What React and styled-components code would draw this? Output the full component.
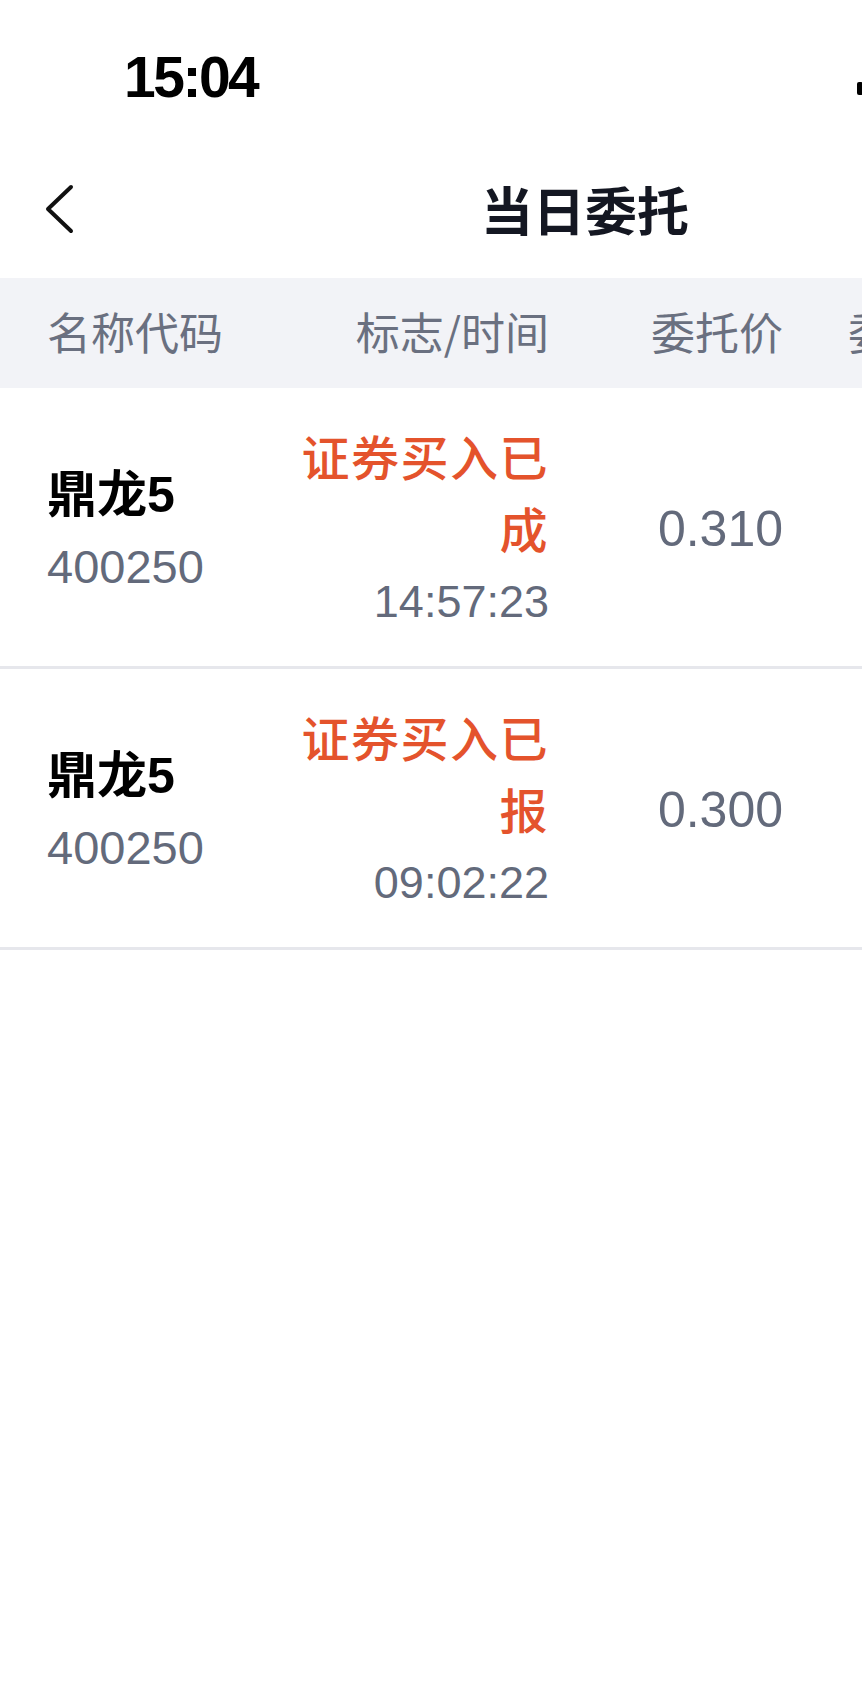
import React from "react";
import styled, { createGlobalStyle } from "styled-components";

const GlobalStyle = createGlobalStyle`
  html, body {
    margin: 0;
    padding: 0;
    background: #ffffff;
    overflow: hidden;
  }
  body {
    font-family: "Liberation Sans", "Noto Sans CJK SC", sans-serif;
    -webkit-font-smoothing: antialiased;
  }
`;

const Page = styled.div`
  width: 1170px;
  min-height: 1684px;
  background: #ffffff;
`;

const StatusBar = styled.div`
  height: 154px;
  display: grid;
  grid-template-columns: 857px 1fr;
  align-items: center;
`;

const Clock = styled.div`
  padding-left: 124px;
  font-family: "Liberation Sans", sans-serif;
  font-weight: 700;
  font-size: 57px;
  line-height: 1;
  letter-spacing: -2.5px;
  color: #000000;
`;

const StatusIcons = styled.div`
  display: flex;
  align-items: center;
  gap: 12px;
  padding-top: 10px;
`;

const NavBar = styled.div`
  height: 124px;
  box-sizing: border-box;
  padding: 0 43px 14px;
  display: grid;
  grid-template-columns: 1fr auto 1fr;
  align-items: center;
`;

const BackButton = styled.button`
  justify-self: start;
  border: 0;
  background: none;
  padding: 0;
  margin: 0;
  display: flex;
  cursor: pointer;
`;

const Title = styled.h1`
  margin: 0;
  font-family: "Noto Sans CJK SC", sans-serif;
  font-size: 52px;
  font-weight: 700;
  line-height: 1;
  color: #141722;
`;

const columns = "250px 252px 234px 241px 1fr";

const HeaderRow = styled.div`
  height: 110px;
  box-sizing: border-box;
  padding: 0 47px 4px;
  background: #f2f3f7;
  display: grid;
  grid-template-columns: ${columns};
  align-items: center;
`;

const HeadCell = styled.div`
  font-family: "Noto Sans CJK SC", sans-serif;
  font-size: 44px;
  line-height: 1;
  color: #6a7080;
  text-align: ${(p) => (p.$left ? "left" : "right")};
  white-space: nowrap;
`;

const Row = styled.div`
  box-sizing: border-box;
  padding: 31px 47px 28px;
  display: grid;
  grid-template-columns: ${columns};
  align-items: center;
  border-bottom: 3px solid #e6e7ec;
`;

const NameCell = styled.div`
  display: flex;
  flex-direction: column;
  padding-top: 5px;
`;

const StockName = styled.div`
  font-family: "Liberation Sans", "Noto Sans CJK SC", sans-serif;
  font-size: 50px;
  font-weight: 700;
  line-height: 72px;
  color: #000000;
`;

const StockCode = styled.div`
  font-family: "Liberation Sans", sans-serif;
  font-size: 47px;
  line-height: 72px;
  color: #636a7b;
`;

const StatusCell = styled.div`
  display: flex;
  flex-direction: column;
  align-items: flex-end;
  text-align: right;
`;

const StatusText = styled.div`
  font-family: "Noto Sans CJK SC", sans-serif;
  font-size: 48px;
  font-weight: 500;
  letter-spacing: 1.5px;
  line-height: 72px;
  color: #e4532c;
`;

const TimeText = styled.div`
  margin-top: 3px;
  font-family: "Liberation Sans", sans-serif;
  font-size: 45px;
  line-height: 72px;
  color: #636a7b;
`;

const ValueCell = styled.div`
  font-family: "Liberation Sans", sans-serif;
  font-size: 50px;
  line-height: 72px;
  color: #636a7b;
  text-align: right;
`;

const SignalIcon = () => (
  <svg width="40" height="26" viewBox="0 0 40 26">
    <rect x="0" y="13" width="6" height="13" rx="2" fill="#000" />
    <rect x="11" y="9" width="6" height="17" rx="2" fill="#000" />
    <rect x="22" y="5" width="6" height="21" rx="2" fill="#000" />
    <rect x="33" y="0" width="6" height="26" rx="2" fill="#000" />
  </svg>
);

const ChevronLeft = () => (
  <svg width="32" height="52" viewBox="0 0 32 52">
    <path
      d="M28 4 L5 26 L28 48"
      fill="none"
      stroke="#111111"
      strokeWidth="4"
      strokeLinecap="round"
      strokeLinejoin="round"
    />
  </svg>
);

const orders = [
  { name: "鼎龙5", code: "400250", status: "证券买入已成", time: "14:57:23", price: "0.310", qty: "1000", deal: "1000" },
  { name: "鼎龙5", code: "400250", status: "证券买入已报", time: "09:02:22", price: "0.300", qty: "1000", deal: "0" },
];

export default function App() {
  return (
    <>
      <GlobalStyle />
      <Page>
        <StatusBar>
          <Clock>15:04</Clock>
          <StatusIcons>
            <SignalIcon />
          </StatusIcons>
        </StatusBar>
        <NavBar>
          <BackButton aria-label="返回">
            <ChevronLeft />
          </BackButton>
          <Title>当日委托</Title>
          <div />
        </NavBar>
        <HeaderRow>
          <HeadCell $left>名称代码</HeadCell>
          <HeadCell>标志/时间</HeadCell>
          <HeadCell>委托价</HeadCell>
          <HeadCell>委托数量</HeadCell>
          <HeadCell>成交数量</HeadCell>
        </HeaderRow>
        {orders.map((o, i) => (
          <Row key={i}>
            <NameCell>
              <StockName>{o.name}</StockName>
              <StockCode>{o.code}</StockCode>
            </NameCell>
            <StatusCell>
              <StatusText>{o.status}</StatusText>
              <TimeText>{o.time}</TimeText>
            </StatusCell>
            <ValueCell>{o.price}</ValueCell>
            <ValueCell>{o.qty}</ValueCell>
            <ValueCell>{o.deal}</ValueCell>
          </Row>
        ))}
      </Page>
    </>
  );
}
